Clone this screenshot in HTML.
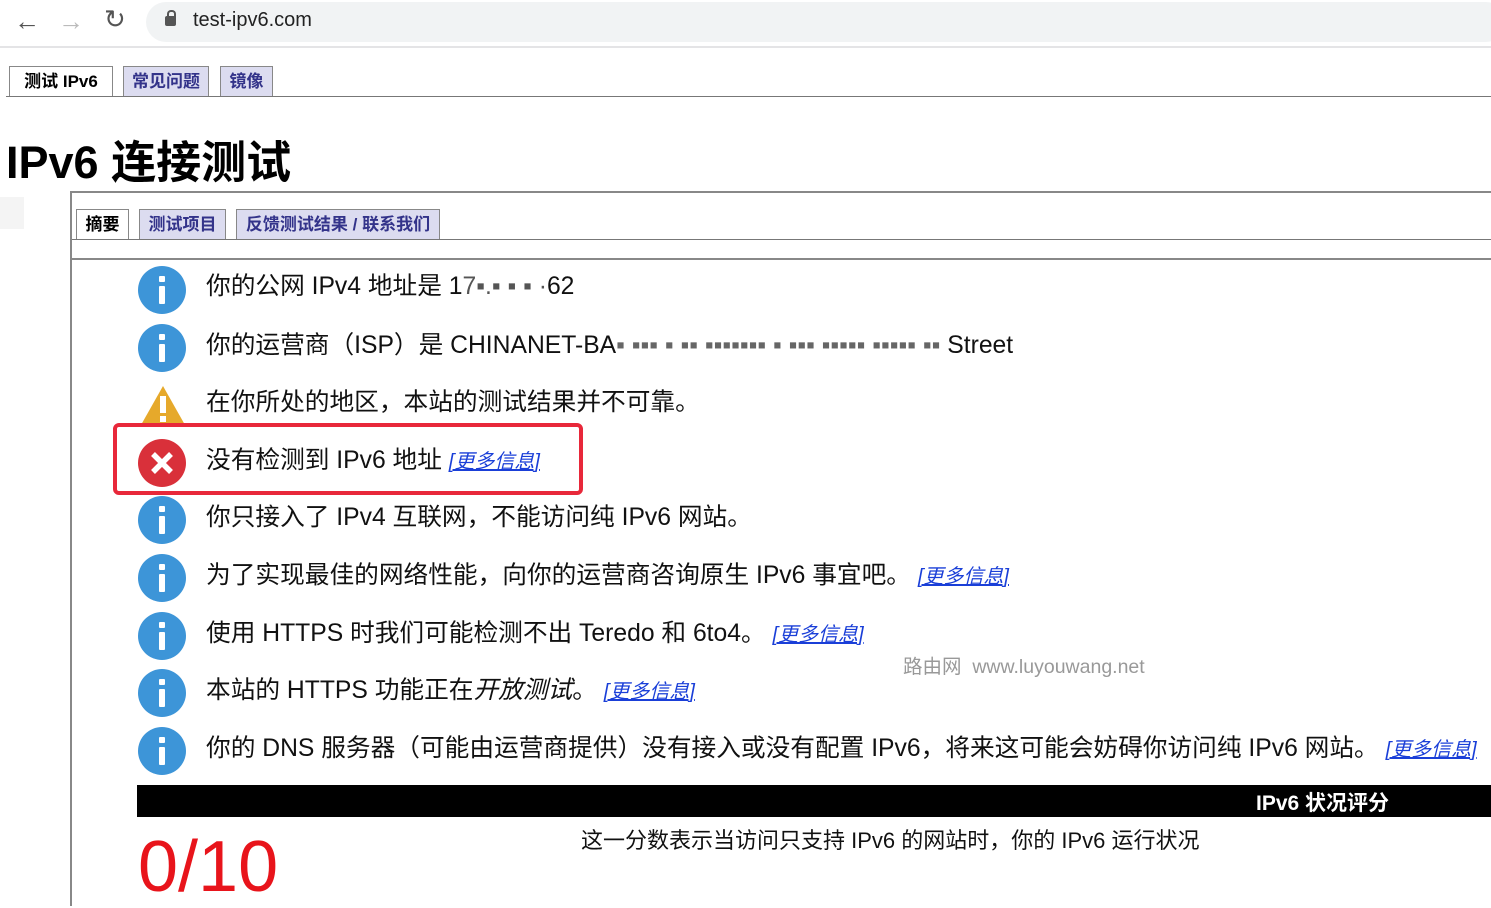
<!DOCTYPE html>
<html><head><meta charset="utf-8"><style>
body{margin:0;width:1491px;height:904px;overflow:hidden;background:#fff;font-family:"Liberation Sans","Noto Sans CJK SC",sans-serif;position:relative}
.a{position:absolute}
.chrome{left:0;top:0;width:1491px;height:46px;background:#fff;border-bottom:2px solid #e4e4e6}
.url{left:146px;top:2px;width:1360px;height:40px;background:#f1f3f4;border-radius:20px}
.tab{position:absolute;height:30px;border:1px solid #888;border-bottom:none;background:#dcdcf0;color:#33338a;font-weight:bold;font-size:16px;line-height:30px;text-align:center;box-sizing:border-box}
.tab.s{background:#fff;color:#000}
.row{position:absolute;left:206px;font-size:24.7px;color:#111;white-space:nowrap}
.ic{position:absolute;left:138px;width:48px;height:48px;border-radius:50%;background:#3d95d8}
.ic::before{content:"";position:absolute;left:21px;top:10px;width:6px;height:6px;background:#fff;border-radius:1px}
.ic::after{content:"";position:absolute;left:21px;top:20px;width:6px;height:18px;background:#fff;border-radius:1px}
a{color:#1a3fd8;font-style:italic;font-size:20px;text-decoration:underline}
</style></head><body>
<div class="a chrome"></div>
<div class="a url"></div>
<div class="a" style="left:14px;top:6px;font-size:26px;color:#555">&#8592;</div>
<div class="a" style="left:58px;top:6px;font-size:26px;color:#bbb">&#8594;</div>
<div class="a" style="left:104px;top:4px;font-size:26px;color:#555">&#8635;</div>
<div class="a" style="left:165px;top:16px;width:11px;height:10px;background:#555;border-radius:2px"></div>
<div class="a" style="left:167px;top:10px;width:5px;height:7px;border:2px solid #555;border-bottom:none;border-radius:4px 4px 0 0"></div>
<div class="a" style="left:193px;top:9px;font-size:20px;color:#222">test-ipv6.com</div>

<div class="tab s" style="left:9px;top:66px;width:104px;font-size:17px">测试 IPv6</div>
<div class="tab" style="left:123px;top:66px;width:86px;font-size:17px">常见问题</div>
<div class="tab" style="left:220px;top:66px;width:53px;font-size:17px">镜像</div>
<div class="a" style="left:6px;top:96px;width:1485px;height:1px;background:#777"></div>

<div class="a" style="left:6px;top:126px;font-size:45px;font-weight:bold;color:#000">IPv6 连接测试</div>
<div class="a" style="left:0;top:197px;width:24px;height:32px;background:#f4f4f4"></div>

<div class="a" style="left:70px;top:191px;width:1421px;height:713px;border-left:2px solid #888;border-top:2px solid #888"></div>
<div class="tab s" style="left:76px;top:209px;width:53px;font-size:17px">摘要</div>
<div class="tab" style="left:139px;top:209px;width:87px;font-size:17px">测试项目</div>
<div class="tab" style="left:236px;top:209px;width:204px;font-size:17px">反馈测试结果 / 联系我们</div>
<div class="a" style="left:72px;top:239px;width:1419px;height:1px;background:#777"></div>
<div class="a" style="left:72px;top:258px;width:1419px;height:2px;background:#888"></div>

<div class="ic" style="top:266px"></div>
<div class="row" style="top:266px">你的公网 IPv4 地址是 1<span style="color:#555">7▪.▪ ▪ ▪ ·</span>62</div>
<div class="ic" style="top:324px"></div>
<div class="row" style="top:325px">你的运营商（ISP）是 CHINANET-BA<span style="color:#666">▪ ▪▪▪ ▪ ▪▪ ▪▪▪▪▪▪▪ ▪ ▪▪▪ ▪▪▪▪▪ ▪▪▪▪▪ ▪▪</span> Street</div>
<svg class="a" style="left:140px;top:384px" width="46" height="42"><path d="M23 2 L45 41 L1 41 Z" fill="#e6a92b"/><rect x="20" y="12" width="6" height="17" fill="#fff"/><rect x="20" y="32" width="6" height="6" fill="#fff"/></svg>
<div class="row" style="top:382px">在你所处的地区，本站的测试结果并不可靠。</div>

<div class="a" style="left:113px;top:423px;width:462px;height:64px;border:4px solid #e8283a;border-radius:6px"></div>
<svg class="a" style="left:138px;top:439px" width="48" height="48"><circle cx="24" cy="24" r="24" fill="#d9303a"/><path d="M15 15 L33 33 M33 15 L15 33" stroke="#fff" stroke-width="5.5"/></svg>
<div class="row" style="top:440px">没有检测到 IPv6 地址 <a>[更多信息]</a></div>

<div class="ic" style="top:496px"></div>
<div class="row" style="top:497px">你只接入了 IPv4 互联网，不能访问纯 IPv6 网站。</div>
<div class="ic" style="top:554px"></div>
<div class="row" style="top:555px">为了实现最佳的网络性能，向你的运营商咨询原生 IPv6 事宜吧。 <a>[更多信息]</a></div>
<div class="ic" style="top:612px"></div>
<div class="row" style="top:613px">使用 HTTPS 时我们可能检测不出 Teredo 和 6to4。 <a>[更多信息]</a></div>
<div class="ic" style="top:669px"></div>
<div class="row" style="top:670px">本站的 HTTPS 功能正在<i>开放测试</i>。 <a>[更多信息]</a></div>
<div class="ic" style="top:727px"></div>
<div class="row" style="top:728px">你的 DNS 服务器（可能由运营商提供）没有接入或没有配置 IPv6，将来这可能会妨碍你访问纯 IPv6 网站。 <a>[更多信息]</a></div>

<div class="a" style="left:903px;top:650px;font-size:19.5px;color:#999">路由网&nbsp; www.luyouwang.net</div>

<div class="a" style="left:137px;top:785px;width:1354px;height:32px;background:#000"></div>
<div class="a" style="left:1256px;top:787px;font-size:21px;font-weight:bold;color:#fff">IPv6 状况评分</div>
<div class="a" style="left:581px;top:823px;font-size:22px;color:#111">这一分数表示当访问只支持 IPv6 的网站时，你的 IPv6 运行状况</div>
<div class="a" style="left:138px;top:826px;font-size:72px;color:#e8141b">0/10</div>
</body></html>
